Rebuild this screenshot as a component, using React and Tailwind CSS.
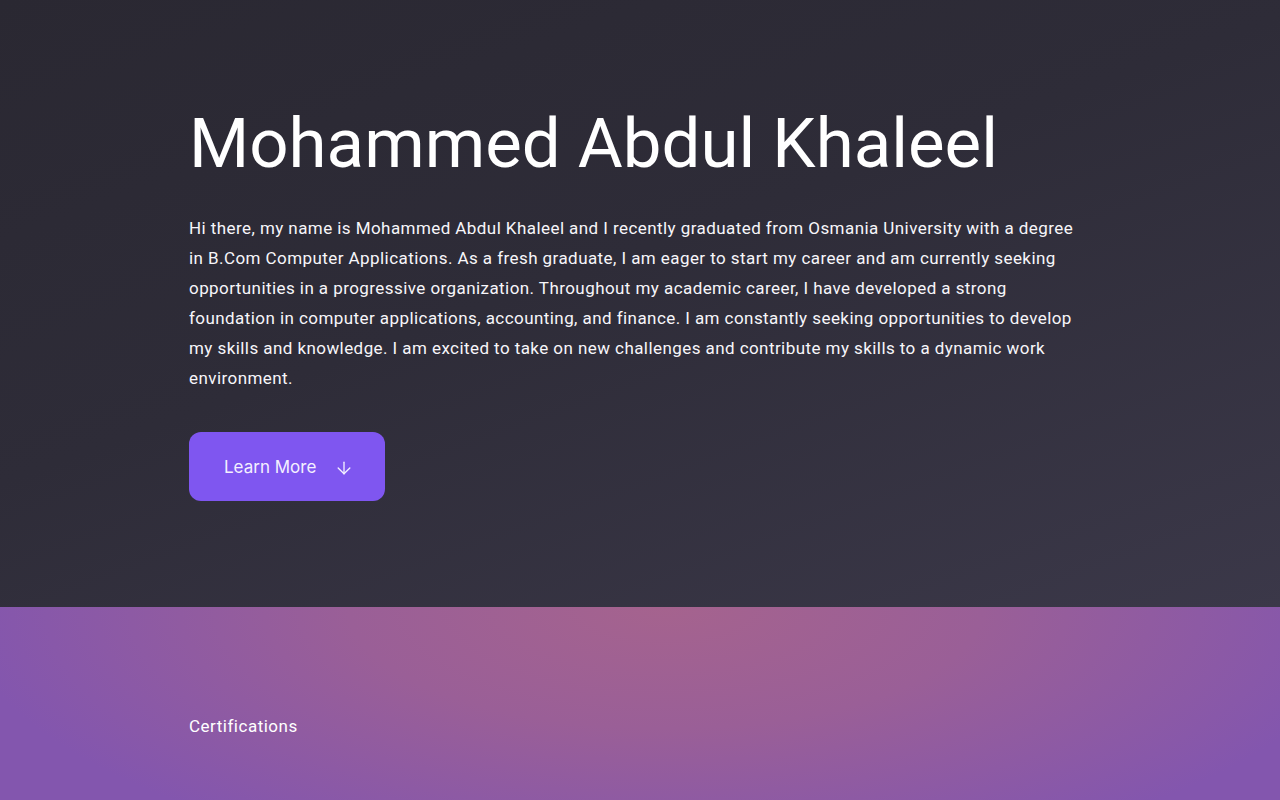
import { ArrowDown } from "lucide-react";

const App = () => {
  return (
    <div className="min-h-screen font-['Roboto',sans-serif] text-white">
      {/* Hero */}
      <section className="h-[607px] bg-[linear-gradient(160deg,#2a2832_0%,#2e2c38_45%,#3b3849_100%)]">
        <div className="w-[902px] mx-auto pt-[96px]">
          <h1 className="text-[69px] leading-[96px] font-normal">
            Mohammed Abdul Khaleel
          </h1>
          <p className="mt-[21px] text-[17px] leading-[30px] tracking-[0.43px] text-[#f7f6fa]">
            Hi there, my name is Mohammed Abdul Khaleel and I recently graduated
            from Osmania University with a degree in B.Com Computer
            Applications. As a fresh graduate, I am eager to start my career and
            am currently seeking opportunities in a progressive organization.
            Throughout my academic career, I have developed a strong foundation
            in computer applications, accounting, and finance. I am constantly
            seeking opportunities to develop my skills and knowledge. I am
            excited to take on new challenges and contribute my skills to a
            dynamic work environment.
          </p>
          <button className="mt-[39px] h-[69px] w-[196px] rounded-xl bg-[#7f56f0] flex items-center pl-[35px] pt-[2px] gap-[18px] font-['Inter',sans-serif] text-[17px] text-[#f4f0ff]">
            Learn More
            <ArrowDown className="h-5 w-5" strokeWidth={1.6} />
          </button>
        </div>
      </section>

      {/* Certifications */}
      <section className="h-[193px] bg-[radial-gradient(ellipse_55%_140%_at_52%_0%,#a5638e_0%,#9a5f97_45%,#8356ae_100%)]">
        <div className="w-[902px] mx-auto pt-[108px]">
          <h2 className="text-[17px] leading-[22px] tracking-[0.5px] font-normal">
            Certifications
          </h2>
        </div>
      </section>
    </div>
  );
};

export default App;
